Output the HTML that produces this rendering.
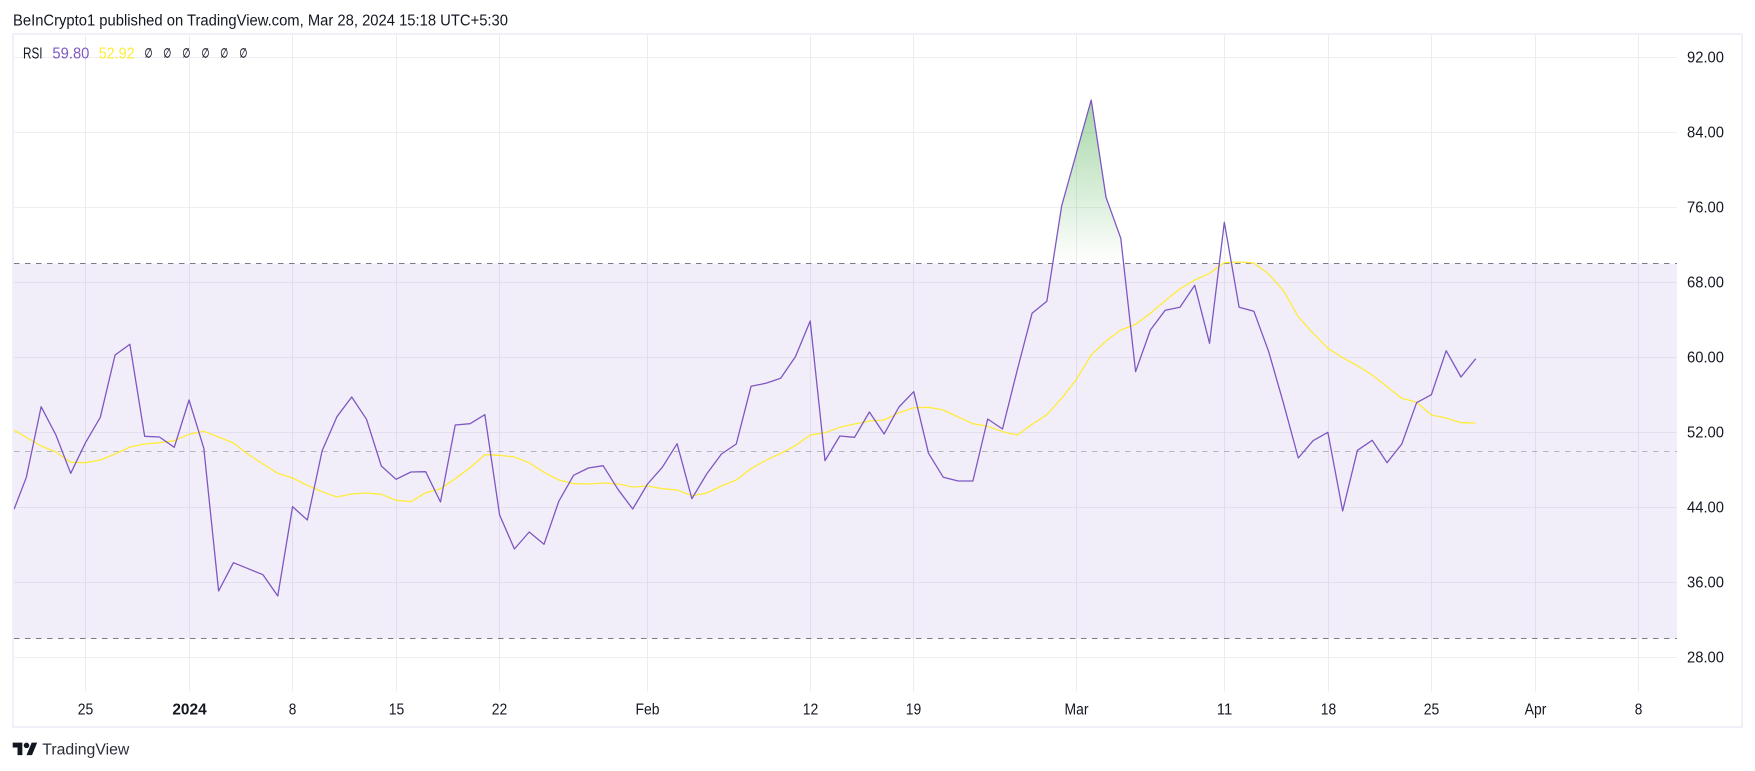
<!DOCTYPE html>
<html>
<head>
<meta charset="utf-8">
<style>
html,body{margin:0;padding:0;background:#fff;width:1755px;height:771px;overflow:hidden}
svg{display:block}
text{font-family:"Liberation Sans",sans-serif;font-size:15.5px;fill:#131722}
.g line{stroke:#efeff3;stroke-width:1}
.g .v{stroke:#ececf1}
.t text{text-anchor:middle;dominant-baseline:central}
.p text{dominant-baseline:central}
.t .n{font-family:'DejaVu Sans',sans-serif;font-size:13px;stroke:#131722;stroke-width:.25}
</style>
</head>
<body>
<svg width="1755" height="771" viewBox="0 0 1755 771" xmlns="http://www.w3.org/2000/svg">
<defs>
<linearGradient id="gf" gradientUnits="userSpaceOnUse" x1="0" y1="100" x2="0" y2="263.75">
<stop offset="0" stop-color="#4caf50" stop-opacity=".5"/>
<stop offset="1" stop-color="#4caf50" stop-opacity="0"/>
</linearGradient>
<clipPath id="c"><rect x="14" y="35" width="1663" height="656.5"/></clipPath>
</defs>
<text x="13" y="25.5" textLength="495" lengthAdjust="spacingAndGlyphs">BeInCrypto1 published on TradingView.com, Mar 28, 2024 15:18 UTC+5:30</text>
<rect x="13" y="34" width="1729" height="693" fill="#fff" stroke="#f0f1f8" stroke-width="2"/>

<g class="g">
<line x1="14" x2="1677" y1="57.5" y2="57.5"/>
<line x1="14" x2="1677" y1="132.5" y2="132.5"/>
<line x1="14" x2="1677" y1="207.5" y2="207.5"/>
<line x1="14" x2="1677" y1="282.5" y2="282.5"/>
<line x1="14" x2="1677" y1="357.5" y2="357.5"/>
<line x1="14" x2="1677" y1="432.5" y2="432.5"/>
<line x1="14" x2="1677" y1="507.5" y2="507.5"/>
<line x1="14" x2="1677" y1="582.5" y2="582.5"/>
<line x1="14" x2="1677" y1="657.5" y2="657.5"/>
<line class="v" y1="35" y2="691.5" x1="85.5" x2="85.5"/>
<line class="v" y1="35" y2="691.5" x1="189.5" x2="189.5"/>
<line class="v" y1="35" y2="691.5" x1="292.5" x2="292.5"/>
<line class="v" y1="35" y2="691.5" x1="396.5" x2="396.5"/>
<line class="v" y1="35" y2="691.5" x1="499.5" x2="499.5"/>
<line class="v" y1="35" y2="691.5" x1="647.5" x2="647.5"/>
<line class="v" y1="35" y2="691.5" x1="810.5" x2="810.5"/>
<line class="v" y1="35" y2="691.5" x1="913.5" x2="913.5"/>
<line class="v" y1="35" y2="691.5" x1="1076.5" x2="1076.5"/>
<line class="v" y1="35" y2="691.5" x1="1224.5" x2="1224.5"/>
<line class="v" y1="35" y2="691.5" x1="1328.5" x2="1328.5"/>
<line class="v" y1="35" y2="691.5" x1="1431.5" x2="1431.5"/>
<line class="v" y1="35" y2="691.5" x1="1535.5" x2="1535.5"/>
<line class="v" y1="35" y2="691.5" x1="1638.5" x2="1638.5"/>
</g>

<rect x="14" y="263.75" width="1663" height="375" fill="#7e57c2" fill-opacity=".1"/>
<line x1="14" x2="1677" y1="263.5" y2="263.5" stroke="#787b86" stroke-width="1" stroke-dasharray="5.5 5.5"/>
<line x1="14" x2="1677" y1="638.5" y2="638.5" stroke="#787b86" stroke-width="1" stroke-dasharray="5.5 5.5"/>
<line x1="14" x2="1677" y1="451.5" y2="451.5" stroke="#787b86" stroke-opacity=".5" stroke-width="1" stroke-dasharray="5.5 5.5"/>

<polygon points="1052.7,263.75 1061.6,206 1076.3,153 1090.7,100 1105.7,197.3 1120.3,238.3 1123,263.75" fill="url(#gf)"/>
<polygon points="1219.5,263.75 1224.3,222.3 1229.5,263.75" fill="url(#gf)" opacity=".35"/>

<g clip-path="url(#c)">
<g transform="translate(85.5,0) scale(14.79,1)" fill="none" stroke-linejoin="round">
<polyline vector-effect="non-scaling-stroke" stroke="#ffeb3b" stroke-width="1.3" points="-4.83,430 -4,437.3 -3,446 -2,452 -1,462.3 0,462.7 1,460 2,454 3,447 4,444 5,442.7 6,440.7 7,434.3 8,431.3 9,437 10,443 11,454.3 12,464 13,473.3 14,478 15,485.3 16,491.7 17,497 18,494 19,493 20,494.3 21,500.3 22,501.7 23,492.7 24,488.7 25,478.7 26,467.7 27,454.7 28,455.3 29,457 30,462.7 31,472.3 32,480 33,483.7 34,484 35,483 36,484 37,487 38,486 39,488.7 40,490 41,495.7 42,493 43,486 44,480 45,468.7 46,460.3 47,453.3 48,445.7 49,435 50,432.7 51,427.3 52,424 53,421 54,420 55,412.7 56,407.7 57,407.3 58,410 59,417 60,423.7 61,426.3 62,431.7 63,435 64,424.3 65,414.7 66,398.3 67,379.3 68,355 69,341 70,330 71,324.3 72,313.3 73,300.7 74,288.7 75,280 76,273.3 77,262.7 78,262 79,263 80,274 81,290.7 82,316.7 83,333.3 84,348.3 85,357.7 86,365.7 87,375 88,386.7 89,398.3 90,402.3 91,415 92,418 93,422.7 94,423"/>
<polyline vector-effect="non-scaling-stroke" stroke="#7e57c2" stroke-width="1.3" points="-4.83,509.3 -4,477.3 -3,406.7 -2,435 -1,473.3 0,442.7 1,417.3 2,355 3,344.3 4,436.3 5,437 6,447.3 7,400 8,448.3 9,591 10,562.7 11,568.7 12,574.7 13,596 14,506.7 15,520 16,450.7 17,416.7 18,397 19,419.3 20,466 21,479.3 22,472 23,471.7 24,502 25,425 26,423.7 27,414.7 28,515 29,549 30,532 31,544.3 32,501.3 33,475.3 34,468 35,465.7 36,489.3 37,509 38,484 39,467.3 40,443.7 41,498.7 42,474 43,454 44,444 45,386.3 46,383.3 47,378.3 48,356.7 49,321 50,460.7 51,436 52,437.3 53,412 54,434 55,407 56,391.7 57,453.3 58,477.3 59,481 60,481 61,419 62,429 63,370 64,313.3 65,301.3 66,206 67,153 68,100 69,197.3 70,238.3 71,371.7 72,330 73,310.3 74,307.3 75,285.3 76,343.3 77,222.3 78,307.3 79,311.3 80,351.7 81,403.3 82,458 83,440.7 84,432.3 85,511 86,450.3 87,440.3 88,462.7 89,444 90,402.7 91,394.7 92,350.7 93,377 94,358.7"/>
</g>
</g>

<g class="p">
<text x="23" y="54" textLength="19.5" lengthAdjust="spacingAndGlyphs">RSI</text>
<text x="52.4" y="54" textLength="37" lengthAdjust="spacingAndGlyphs" style="fill:#7e57c2">59.80</text>
<text x="98.7" y="54" textLength="36" lengthAdjust="spacingAndGlyphs" style="fill:#ffeb3b">52.92</text>
</g>
<g class="t">
<text class="n" x="148.5" y="54" textLength="8" lengthAdjust="spacingAndGlyphs">∅</text>
<text class="n" x="167.2" y="54" textLength="8" lengthAdjust="spacingAndGlyphs">∅</text>
<text class="n" x="186.4" y="54" textLength="8" lengthAdjust="spacingAndGlyphs">∅</text>
<text class="n" x="205.5" y="54" textLength="8" lengthAdjust="spacingAndGlyphs">∅</text>
<text class="n" x="224.3" y="54" textLength="8" lengthAdjust="spacingAndGlyphs">∅</text>
<text class="n" x="243.4" y="54" textLength="8" lengthAdjust="spacingAndGlyphs">∅</text>

<text x="1705.5" y="58" textLength="37" lengthAdjust="spacingAndGlyphs">92.00</text>
<text x="1705.5" y="133" textLength="37" lengthAdjust="spacingAndGlyphs">84.00</text>
<text x="1705.5" y="208" textLength="37" lengthAdjust="spacingAndGlyphs">76.00</text>
<text x="1705.5" y="283" textLength="37" lengthAdjust="spacingAndGlyphs">68.00</text>
<text x="1705.5" y="358" textLength="37" lengthAdjust="spacingAndGlyphs">60.00</text>
<text x="1705.5" y="433" textLength="37" lengthAdjust="spacingAndGlyphs">52.00</text>
<text x="1705.5" y="508" textLength="37" lengthAdjust="spacingAndGlyphs">44.00</text>
<text x="1705.5" y="583" textLength="37" lengthAdjust="spacingAndGlyphs">36.00</text>
<text x="1705.5" y="658" textLength="37" lengthAdjust="spacingAndGlyphs">28.00</text>

<text x="85.5" y="710" textLength="15.5" lengthAdjust="spacingAndGlyphs">25</text>
<text x="189.5" y="710" textLength="34.3" lengthAdjust="spacingAndGlyphs" style="font-weight:bold">2024</text>
<text x="292.5" y="710" textLength="7.6" lengthAdjust="spacingAndGlyphs">8</text>
<text x="396.5" y="710" textLength="15.5" lengthAdjust="spacingAndGlyphs">15</text>
<text x="499.5" y="710" textLength="15.5" lengthAdjust="spacingAndGlyphs">22</text>
<text x="647.5" y="710" textLength="24" lengthAdjust="spacingAndGlyphs">Feb</text>
<text x="810.5" y="710" textLength="15.5" lengthAdjust="spacingAndGlyphs">12</text>
<text x="913.5" y="710" textLength="15.5" lengthAdjust="spacingAndGlyphs">19</text>
<text x="1076.5" y="710" textLength="24" lengthAdjust="spacingAndGlyphs">Mar</text>
<text x="1224.5" y="710" textLength="15.5" lengthAdjust="spacingAndGlyphs">11</text>
<text x="1328.5" y="710" textLength="15.5" lengthAdjust="spacingAndGlyphs">18</text>
<text x="1431.5" y="710" textLength="15.5" lengthAdjust="spacingAndGlyphs">25</text>
<text x="1535.5" y="710" textLength="21.7" lengthAdjust="spacingAndGlyphs">Apr</text>
<text x="1638.5" y="710" textLength="7.6" lengthAdjust="spacingAndGlyphs">8</text>
</g>

<g transform="translate(12.7,739.9) scale(.69)" fill="#131722">
<path d="M14 22H7V11H0V4h14v18zM28 22h-8l7.5-18h8L28 22z"/>
<circle cx="20" cy="8" r="4"/>
</g>
<text x="42.3" y="754.5" textLength="87" lengthAdjust="spacingAndGlyphs" style="font-size:15.5px;fill:#2a2e39">TradingView</text>
</svg>
</body>
</html>
